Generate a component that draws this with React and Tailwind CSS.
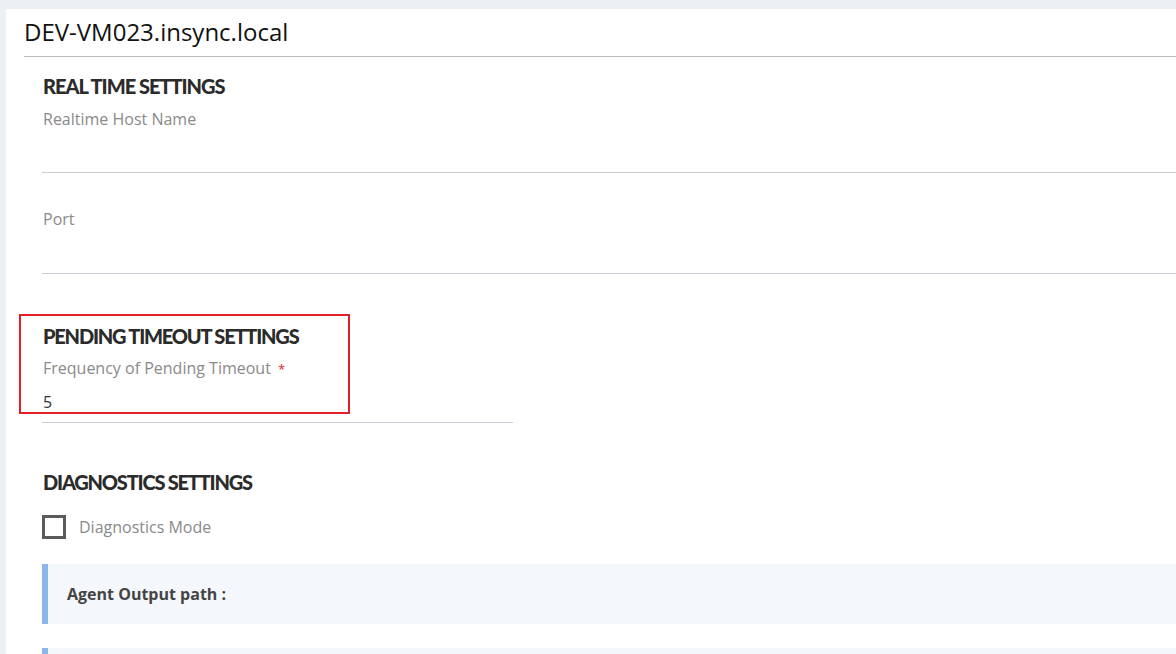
export default function App() {
  return (
    <div className="min-h-screen bg-[#edf0f3] pt-[9px] pl-[6px] overflow-hidden" style={{ height: 654 }}>
      <div className="bg-white h-full font-['Open_Sans',sans-serif]">
        <div className="pl-[18px] pt-[8px]">
          <h1 className="text-[24px] leading-[30px] text-[#111]">DEV-VM023.insync.local</h1>
          <div className="mt-[9px] border-t border-[#bdbdbd]"></div>
        </div>

        <div className="pl-[36px]">
          <section className="pt-[18px]">
            <h2 className="font-['Lato',sans-serif] text-[20px] leading-[22px] font-black tracking-[-1px] text-[#2b2b2b] pl-px">REAL TIME SETTINGS</h2>
            <div className="mt-[12px]">
              <label className="block text-[16px] leading-[20px] text-[#8a8a8a] pl-px">Realtime Host Name</label>
              <div className="h-[44px] border-b border-[#c8ccd4]"></div>
            </div>
            <div className="mt-[36px]">
              <label className="block text-[16px] leading-[20px] text-[#8a8a8a] pl-px">Port</label>
              <div className="h-[45px] border-b border-[#c8ccd4]"></div>
            </div>
          </section>

          <section className="mt-[40px] w-[471px] relative">
            <div className="absolute left-[-23px] top-0 w-[331px] h-[100px] border-2 border-[#e3202a]"></div>
            <h2 className="pt-[11px] font-['Lato',sans-serif] text-[20px] leading-[22px] font-black tracking-[-1.2px] text-[#2b2b2b] pl-px">PENDING TIMEOUT SETTINGS</h2>
            <label className="block mt-[11px] text-[16px] leading-[20px] text-[#8a8a8a] pl-px">
              Frequency of Pending Timeout <span className="text-[#e3202a] text-[13px] ml-[3px]">*</span>
            </label>
            <div className="mt-[12px] text-[16px] leading-[22px] text-[#333] pl-px">5</div>
            <div className="mt-[9px] border-b border-[#c8ccd4]"></div>
          </section>

          <section className="mt-[48px]">
            <h2 className="font-['Lato',sans-serif] text-[20px] leading-[22px] font-black tracking-[-1.2px] text-[#2b2b2b] pl-px">DIAGNOSTICS SETTINGS</h2>
            <div className="mt-[22px] flex items-center">
              <div className="w-[24px] h-[24px] border-[3px] border-[#5b5b5b] bg-white"></div>
              <span className="ml-[13px] text-[16px] leading-[22px] text-[#8a8a8a]">Diagnostics Mode</span>
            </div>
            <div className="mt-[25px] h-[60px] bg-[#f4f7fc] border-l-[6px] border-[#8cb5e8] flex items-center pl-[19px]">
              <span className="text-[16px] font-bold text-[#444]">Agent Output path :</span>
            </div>
            <div className="mt-[24px] h-[60px] bg-[#f4f7fc] border-l-[6px] border-[#8cb5e8]"></div>
          </section>
        </div>
      </div>
    </div>
  );
}
